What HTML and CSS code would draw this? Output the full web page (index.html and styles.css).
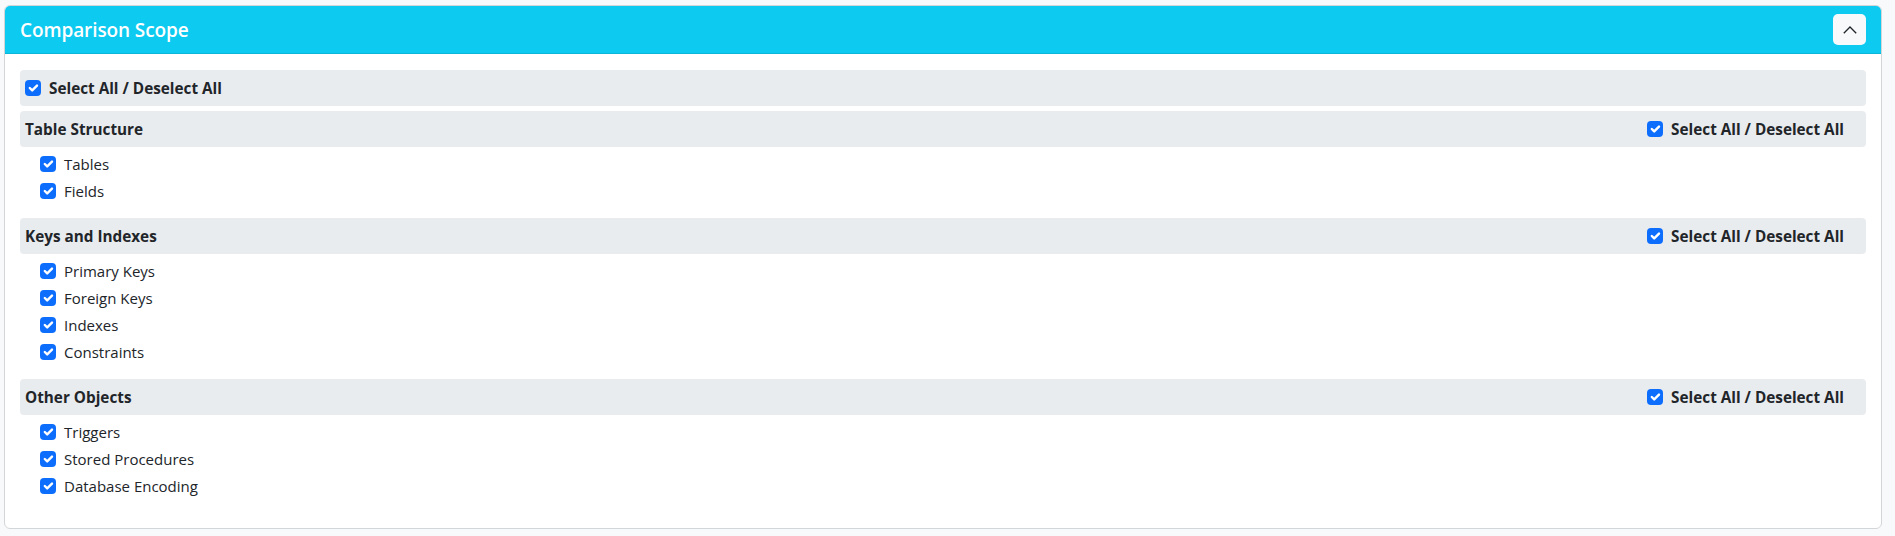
FILE: index.html
```html
<!DOCTYPE html>
<html lang="en">
<head>
<meta charset="utf-8">
<title>Comparison Scope</title>
<link rel="stylesheet" href="styles.css">
</head>
<body>
<div class="page">
  <div class="card">
    <div class="card-header">
      <h5 class="card-title">Comparison Scope</h5>
      <button class="collapse-btn" type="button" aria-label="Collapse">
        <svg width="14" height="8" viewBox="0 0 14 8"><polyline points="0.8,7.2 7,1 13.2,7.2" fill="none" stroke="#212529" stroke-width="1.3"/></svg>
      </button>
    </div>
    <div class="card-body">
      <label class="bar master">
        <svg class="cb" viewBox="0 0 16 16"><rect width="16" height="16" rx="4" fill="#0d6efd"/><path d="M4.8 8l2.4 2.4 4.8-4.8" fill="none" stroke="#fff" stroke-width="2.4" stroke-linecap="round" stroke-linejoin="round"/></svg>
        <span class="bold">Select All / Deselect All</span>
      </label>

      <section class="group">
        <div class="bar group-head">
          <span class="bold">Table Structure</span>
          <label class="group-toggle">
            <svg class="cb" viewBox="0 0 16 16"><rect width="16" height="16" rx="4" fill="#0d6efd"/><path d="M4.8 8l2.4 2.4 4.8-4.8" fill="none" stroke="#fff" stroke-width="2.4" stroke-linecap="round" stroke-linejoin="round"/></svg>
            <span class="bold">Select All / Deselect All</span>
          </label>
        </div>
        <ul class="items">
          <li class="item"><svg class="cb" viewBox="0 0 16 16"><rect width="16" height="16" rx="4" fill="#0d6efd"/><path d="M4.8 8l2.4 2.4 4.8-4.8" fill="none" stroke="#fff" stroke-width="2.4" stroke-linecap="round" stroke-linejoin="round"/></svg><span>Tables</span></li>
          <li class="item"><svg class="cb" viewBox="0 0 16 16"><rect width="16" height="16" rx="4" fill="#0d6efd"/><path d="M4.8 8l2.4 2.4 4.8-4.8" fill="none" stroke="#fff" stroke-width="2.4" stroke-linecap="round" stroke-linejoin="round"/></svg><span>Fields</span></li>
        </ul>
      </section>

      <section class="group">
        <div class="bar group-head">
          <span class="bold">Keys and Indexes</span>
          <label class="group-toggle">
            <svg class="cb" viewBox="0 0 16 16"><rect width="16" height="16" rx="4" fill="#0d6efd"/><path d="M4.8 8l2.4 2.4 4.8-4.8" fill="none" stroke="#fff" stroke-width="2.4" stroke-linecap="round" stroke-linejoin="round"/></svg>
            <span class="bold">Select All / Deselect All</span>
          </label>
        </div>
        <ul class="items">
          <li class="item"><svg class="cb" viewBox="0 0 16 16"><rect width="16" height="16" rx="4" fill="#0d6efd"/><path d="M4.8 8l2.4 2.4 4.8-4.8" fill="none" stroke="#fff" stroke-width="2.4" stroke-linecap="round" stroke-linejoin="round"/></svg><span>Primary Keys</span></li>
          <li class="item"><svg class="cb" viewBox="0 0 16 16"><rect width="16" height="16" rx="4" fill="#0d6efd"/><path d="M4.8 8l2.4 2.4 4.8-4.8" fill="none" stroke="#fff" stroke-width="2.4" stroke-linecap="round" stroke-linejoin="round"/></svg><span>Foreign Keys</span></li>
          <li class="item"><svg class="cb" viewBox="0 0 16 16"><rect width="16" height="16" rx="4" fill="#0d6efd"/><path d="M4.8 8l2.4 2.4 4.8-4.8" fill="none" stroke="#fff" stroke-width="2.4" stroke-linecap="round" stroke-linejoin="round"/></svg><span>Indexes</span></li>
          <li class="item"><svg class="cb" viewBox="0 0 16 16"><rect width="16" height="16" rx="4" fill="#0d6efd"/><path d="M4.8 8l2.4 2.4 4.8-4.8" fill="none" stroke="#fff" stroke-width="2.4" stroke-linecap="round" stroke-linejoin="round"/></svg><span>Constraints</span></li>
        </ul>
      </section>

      <section class="group">
        <div class="bar group-head">
          <span class="bold">Other Objects</span>
          <label class="group-toggle">
            <svg class="cb" viewBox="0 0 16 16"><rect width="16" height="16" rx="4" fill="#0d6efd"/><path d="M4.8 8l2.4 2.4 4.8-4.8" fill="none" stroke="#fff" stroke-width="2.4" stroke-linecap="round" stroke-linejoin="round"/></svg>
            <span class="bold">Select All / Deselect All</span>
          </label>
        </div>
        <ul class="items">
          <li class="item"><svg class="cb" viewBox="0 0 16 16"><rect width="16" height="16" rx="4" fill="#0d6efd"/><path d="M4.8 8l2.4 2.4 4.8-4.8" fill="none" stroke="#fff" stroke-width="2.4" stroke-linecap="round" stroke-linejoin="round"/></svg><span>Triggers</span></li>
          <li class="item"><svg class="cb" viewBox="0 0 16 16"><rect width="16" height="16" rx="4" fill="#0d6efd"/><path d="M4.8 8l2.4 2.4 4.8-4.8" fill="none" stroke="#fff" stroke-width="2.4" stroke-linecap="round" stroke-linejoin="round"/></svg><span>Stored Procedures</span></li>
          <li class="item"><svg class="cb" viewBox="0 0 16 16"><rect width="16" height="16" rx="4" fill="#0d6efd"/><path d="M4.8 8l2.4 2.4 4.8-4.8" fill="none" stroke="#fff" stroke-width="2.4" stroke-linecap="round" stroke-linejoin="round"/></svg><span>Database Encoding</span></li>
        </ul>
      </section>
    </div>
  </div>
</div>
</body>
</html>
```

FILE: styles.css
```css
* { box-sizing: border-box; }

html, body {
  margin: 0;
  background: #f8f9fa;
}

body {
  font-family: "Open Sans", "Noto Sans", "Liberation Sans", sans-serif;
  font-size: 15px;
  color: #212529;
}

.page {
  padding: 5px 13px 7px 4px;
}

.card {
  background: #fff;
  border: 1px solid #d3d6d9;
  border-radius: 6px;
  overflow: hidden;
}

.card-header {
  height: 48px;
  background: #0dcaf0;
  border-bottom: 1px solid #0bb5d8;
  display: flex;
  align-items: center;
  justify-content: space-between;
  padding: 0 15px 0 15px;
}

.card-title {
  margin: 0;
  color: #fff;
  font-size: 19px;
  font-weight: 600;
  letter-spacing: -0.1px;
}

.collapse-btn {
  width: 33px;
  height: 31px;
  border: none;
  border-radius: 5px;
  background: #f8f9fa;
  display: flex;
  align-items: center;
  justify-content: center;
  padding: 0;
}

.card-body {
  padding: 16px 15px 15px 15px;
}

.bar {
  height: 36px;
  background: #e9ecef;
  border-radius: 4px;
  display: flex;
  align-items: center;
}

.master {
  padding: 0 5px;
  gap: 8px;
  margin-bottom: 5px;
}

.group-head {
  justify-content: space-between;
  padding: 0 22px 0 5px;
}

.group-toggle {
  display: flex;
  align-items: center;
  gap: 8px;
}

.bold {
  font-weight: 700;
  font-size: 15.3px;
}

.cb {
  width: 16px;
  height: 16px;
  flex: none;
  display: block;
}

.items {
  list-style: none;
  margin: 5px 0 15px 0;
  padding: 0 0 0 20px;
  display: flex;
  flex-direction: column;
  gap: 3px;
}

.item {
  height: 24px;
  display: flex;
  align-items: center;
  gap: 8px;
}
```
